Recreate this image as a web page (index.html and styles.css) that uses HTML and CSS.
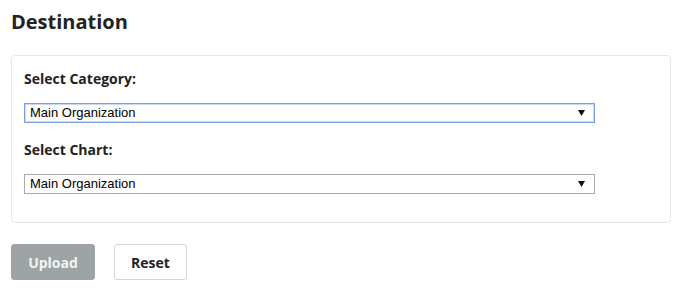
FILE: index.html
```html
<!DOCTYPE html>
<html>
<head>
<meta charset="utf-8">
<link rel="stylesheet" href="styles.css">
</head>
<body>
<div class="page">
  <h2 class="title">Destination</h2>
  <div class="panel">
    <div class="field">
      <label class="label">Select Category:</label>
      <div class="select focused">
        <span class="select-text">Main Organization</span>
        <svg class="arrow" width="7" height="6" viewBox="0 0 7 6"><polygon points="0,0 7,0 3.5,6" fill="#111"/></svg>
      </div>
    </div>
    <div class="field">
      <label class="label">Select Chart:</label>
      <div class="select">
        <span class="select-text">Main Organization</span>
        <svg class="arrow" width="7" height="6" viewBox="0 0 7 6"><polygon points="0,0 7,0 3.5,6" fill="#111"/></svg>
      </div>
    </div>
  </div>
  <div class="actions">
    <button class="btn btn-primary">Upload</button>
    <button class="btn btn-default">Reset</button>
  </div>
</div>
</body>
</html>
```

FILE: styles.css
```css
* { box-sizing: border-box; }
html, body { margin: 0; padding: 0; background: #fff; }
body { font-family: "Open Sans", "Liberation Sans", sans-serif; color: #222; }
.page { padding: 8px 14px 0 11px; width: 684px; }
.title {
  margin: 0;
  font-size: 20px;
  line-height: 28px;
  font-weight: 700;
  color: #222;
}
.panel {
  margin-top: 19px;
  width: 660px;
  border: 1px solid #e6e6e6;
  border-radius: 4px;
  padding: 13px 12px 28px 12px;
}
.field { display: flex; flex-direction: column; }
.field + .field { margin-top: 17px; }
.label {
  font-size: 14px;
  font-weight: 700;
  line-height: 20px;
  color: #222;
  margin-bottom: 14px;
}
.select {
  width: 571px;
  height: 20px;
  border: 1px solid #a9a9a9;
  display: flex;
  align-items: center;
  justify-content: space-between;
  padding: 0 9px 0 5px;
  font-family: "Liberation Sans", Arial, sans-serif;
  font-size: 13px;
  color: #000;
}
.select.focused {
  border: 1px solid #7a9ee2;
  box-shadow: inset 0 0 0 1px #c9d8f5;
}
.select-text { line-height: 18px; }
.arrow { display: block; }
.actions { display: flex; gap: 19px; margin-top: 21px; }
.btn {
  height: 36px;
  border-radius: 3px;
  font-family: "Open Sans", sans-serif;
  font-size: 14px;
  font-weight: 700;
  cursor: pointer;
}
.btn-primary {
  width: 84px;
  background: #9ea3a5;
  border: 1px solid #9ea3a5;
  color: #f2f4f4;
}
.btn-default {
  width: 73px;
  background: #fff;
  border: 1px solid #d6d6d6;
  color: #222;
}
```
